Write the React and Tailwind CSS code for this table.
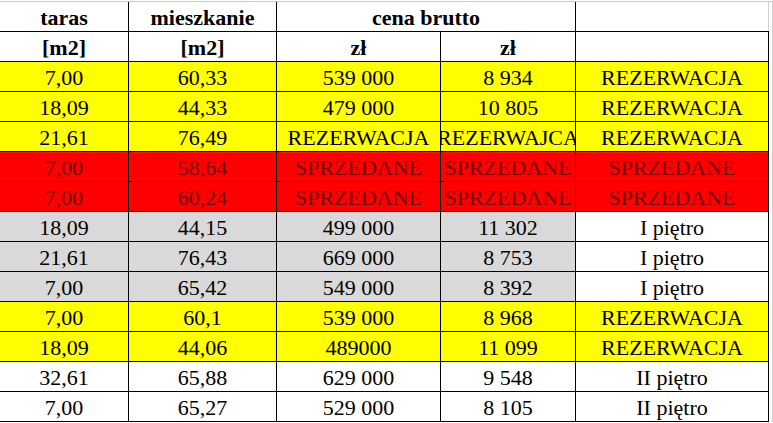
const widths = ['w-[129px]', 'w-[148px]', 'w-[164px]', 'w-[135px]', 'w-[193px]'];

const rows = [
  { kind: 'yellow', cells: ['7,00', '60,33', '539 000', '8 934', 'REZERWACJA'] },
  { kind: 'yellow', cells: ['18,09', '44,33', '479 000', '10 805', 'REZERWACJA'] },
  { kind: 'yellow', cells: ['21,61', '76,49', 'REZERWACJA', 'REZERWAJCA', 'REZERWACJA'] },
  { kind: 'red', cells: ['7,00', '58,64', 'SPRZEDANE', 'SPRZEDANE', 'SPRZEDANE'] },
  { kind: 'red', cells: ['7,00', '60,24', 'SPRZEDANE', 'SPRZEDANE', 'SPRZEDANE'] },
  { kind: 'gray', cells: ['18,09', '44,15', '499 000', '11 302', 'I piętro'] },
  { kind: 'gray', cells: ['21,61', '76,43', '669 000', '8 753', 'I piętro'] },
  { kind: 'gray', cells: ['7,00', '65,42', '549 000', '8 392', 'I piętro'] },
  { kind: 'yellow', cells: ['7,00', '60,1', '539 000', '8 968', 'REZERWACJA'] },
  { kind: 'yellow', cells: ['18,09', '44,06', '489000', '11 099', 'REZERWACJA'] },
  { kind: 'white', cells: ['32,61', '65,88', '629 000', '9 548', 'II piętro'] },
  { kind: 'white', cells: ['7,00', '65,27', '529 000', '8 105', 'II piętro'] },
];

function cellColor(kind, i) {
  if (kind === 'yellow') return 'bg-[#ffff00] text-black';
  if (kind === 'red') return 'bg-[#ff0000] text-[#700000]';
  if (kind === 'gray') return i < 4 ? 'bg-[#d9d9d9] text-black' : 'bg-white text-black';
  return 'bg-white text-black';
}

function Cell({ className = '', children }) {
  return (
    <div
      className={`h-full shrink-0 flex justify-center overflow-hidden whitespace-nowrap pt-[2px] leading-[27px] font-['Liberation_Serif','DejaVu_Serif','Noto_Serif',Tinos,serif] ${className}`}
    >
      {children}
    </div>
  );
}

export default function App() {
  return (
    <div className="w-[773px] h-[423px] bg-white pt-px overflow-hidden text-[22px]">
      <div className="flex border-t border-[#c8c8c8]">
        <div className="w-[769px]">
          {/* naglowek */}
          <div className="flex h-[30px] border-b border-black font-bold">
            <Cell className="w-[129px] border-r border-black">taras</Cell>
            <Cell className="w-[148px] border-r border-black">mieszkanie</Cell>
            <Cell className="w-[299px] border-r border-black">cena brutto</Cell>
            <Cell className="w-[193px] border-r border-[#d0d0d0]"></Cell>
          </div>
          <div className="flex h-[30px] border-b border-black font-bold">
            <Cell className="w-[129px] border-r border-black">[m2]</Cell>
            <Cell className="w-[148px] border-r border-black">[m2]</Cell>
            <Cell className="w-[164px] border-r border-black">zł</Cell>
            <Cell className="w-[135px] border-r border-black">zł</Cell>
            <Cell className="w-[193px] border-r border-black"></Cell>
          </div>

          {/* mieszkania */}
          {rows.map((row, r) => (
            <div key={r} className="flex h-[30px] border-b border-black">
              {row.cells.map((c, i) => (
                <Cell key={i} className={`${widths[i]} border-r border-black ${cellColor(row.kind, i)}`}>
                  {c}
                </Cell>
              ))}
            </div>
          ))}
        </div>
        <div className="w-[4px] self-stretch border-r border-[#d0d0d0]"></div>
      </div>
    </div>
  );
}
